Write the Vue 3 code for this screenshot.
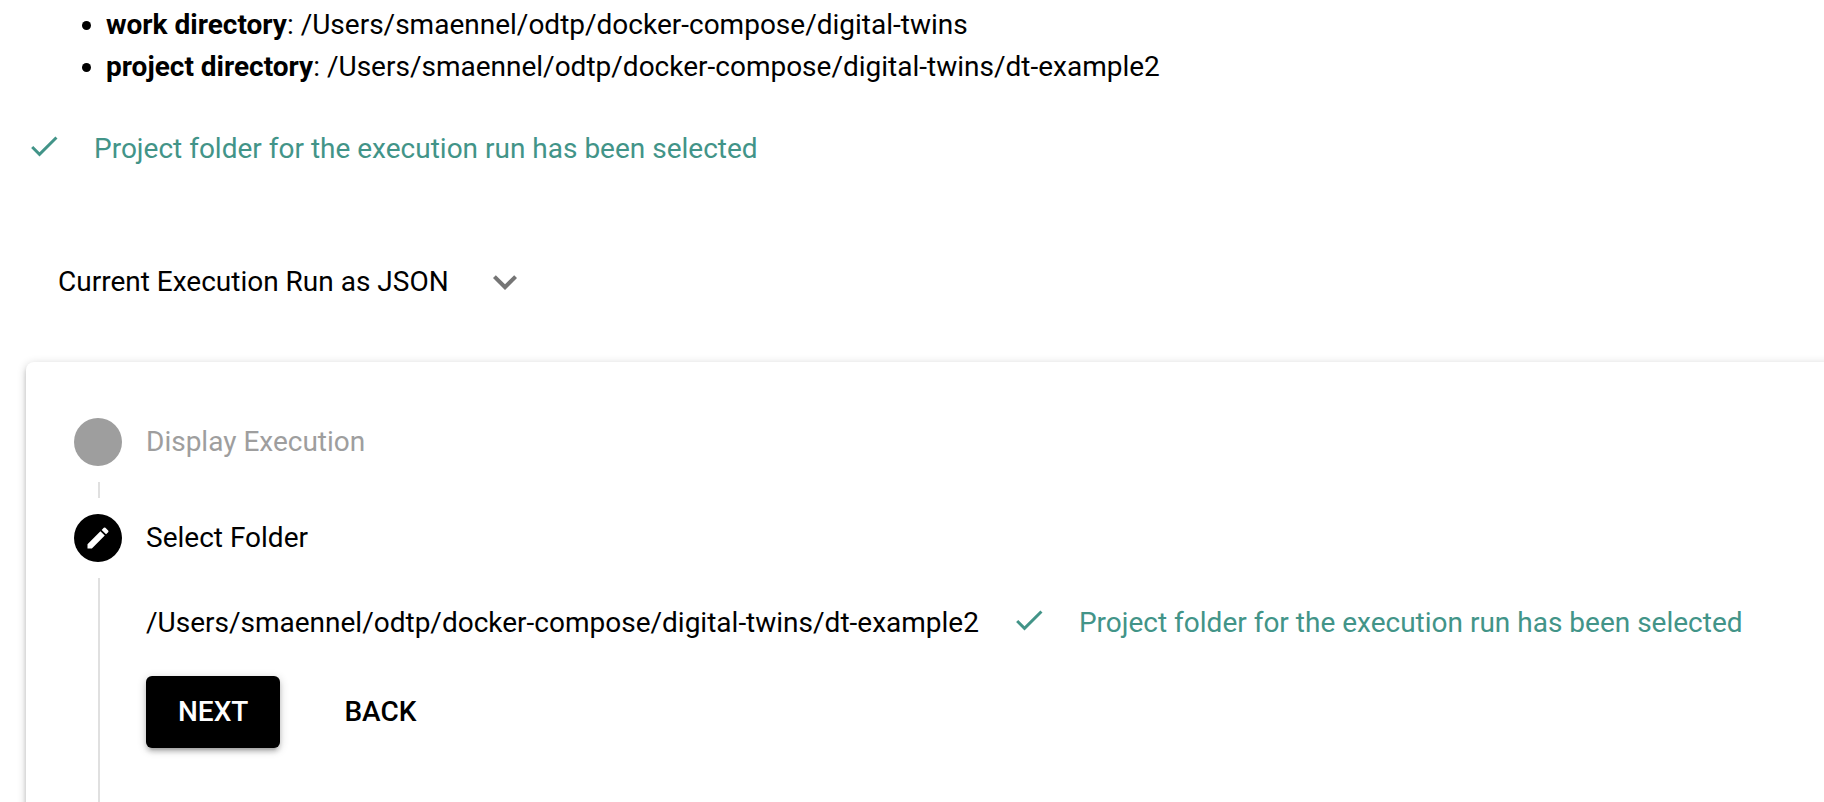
<script setup>
import { ref } from 'vue'

const base = '/Users/smaennel/odtp/docker-compose/digital-twins'
const project = `${base}/dt-example2`
const directories = [
  { label: 'work directory', path: base },
  { label: 'project directory', path: project },
]
const message = 'Project folder for the execution run has been selected'
const expanded = ref(false)
</script>

<template>
  <main class="page">
    <ul class="directories">
      <li v-for="item in directories" :key="item.label">
        <strong>{{ item.label }}</strong>: {{ item.path }}
      </li>
    </ul>

    <p class="status">
      <svg class="check" viewBox="0 0 24 24" aria-hidden="true">
        <path d="M9 16.17 4.83 12l-1.42 1.41L9 19 21 7l-1.41-1.41z" />
      </svg>
      <span>{{ message }}</span>
    </p>

    <button class="expansion" type="button" :aria-expanded="expanded" @click="expanded = !expanded">
      <span>Current Execution Run as JSON</span>
      <svg class="chevron" viewBox="0 0 24 24" aria-hidden="true">
        <path d="M7.41 8.59 12 13.17l4.59-4.58L18 10l-6 6-6-6z" />
      </svg>
    </button>

    <section class="stepper">
      <div class="step">
        <div class="rail">
          <span class="dot"></span>
          <span class="line"></span>
        </div>
        <h2 class="title">Display Execution</h2>
      </div>

      <div class="step active">
        <div class="rail">
          <span class="dot">
            <svg class="pencil" viewBox="0 0 24 24" aria-hidden="true">
              <path d="M3 17.25V21h3.75L17.81 9.94l-3.75-3.75L3 17.25zM20.71 7.04c.39-.39.39-1.02 0-1.41l-2.34-2.34a.9959.9959 0 0 0-1.41 0l-1.83 1.83 3.75 3.75 1.83-1.83z" />
            </svg>
          </span>
          <span class="line"></span>
        </div>
        <div class="body">
          <h2 class="title">Select Folder</h2>
          <div class="folder">
            <span>{{ project }}</span>
            <p class="status">
              <svg class="check" viewBox="0 0 24 24" aria-hidden="true">
                <path d="M9 16.17 4.83 12l-1.42 1.41L9 19 21 7l-1.41-1.41z" />
              </svg>
              <span>{{ message }}</span>
            </p>
          </div>
          <div class="actions">
            <button class="btn primary" type="button">Next</button>
            <button class="btn" type="button">Back</button>
          </div>
        </div>
      </div>
    </section>
  </main>
</template>

<style>
body {
  margin: 0;
  background: #fff;
}
</style>

<style scoped>
.page {
  box-sizing: border-box;
  display: flex;
  flex-direction: column;
  height: 100vh;
  padding: 4px 0 0 26px;
  overflow: hidden;
  color: #000;
  font: 400 28px/42px Roboto, "Liberation Sans", sans-serif;
}

.directories {
  margin: 0 0 40px;
  padding-left: 80px;
}

.status {
  display: flex;
  align-items: flex-start;
  gap: 32px;
  margin: 0;
  color: #429488;
}

.check {
  flex: none;
  width: 36px;
  height: 36px;
  fill: currentColor;
}

.expansion {
  display: flex;
  align-items: center;
  align-self: flex-start;
  gap: 32px;
  height: 96px;
  margin: 64px 0 32px;
  padding: 0 32px;
  border: 0;
  background: none;
  color: inherit;
  font: inherit;
  cursor: pointer;
}

.chevron {
  width: 48px;
  height: 48px;
  fill: #757575;
}

.stepper {
  display: flex;
  flex: 1;
  flex-direction: column;
  margin: 0 -16px -16px 0;
  padding: 56px 48px 0;
  border-radius: 8px;
  background: #fff;
  box-shadow: 0 2px 10px rgba(0, 0, 0, 0.2), 0 4px 4px rgba(0, 0, 0, 0.14), 0 6px 2px -4px rgba(0, 0, 0, 0.12);
}

.step {
  display: flex;
  gap: 24px;
  min-height: 96px;
  color: #9e9e9e;
}

.step.active {
  flex: 1;
  color: #000;
}

.rail {
  display: flex;
  flex-direction: column;
  gap: 16px;
  width: 48px;
}

.dot {
  display: flex;
  flex: none;
  align-items: center;
  justify-content: center;
  width: 48px;
  height: 48px;
  border-radius: 50%;
  background: currentColor;
}

.pencil {
  width: 28px;
  height: 28px;
  fill: #fff;
}

.line {
  flex: 1;
  width: 2px;
  margin: 0 0 16px 24px;
  background: #e0e0e0;
}

.active .line {
  margin-bottom: 0;
}

.title {
  margin: 0;
  font-size: 28px;
  font-weight: 400;
  line-height: 48px;
}

.folder {
  display: flex;
  align-items: center;
  gap: 32px;
  margin: 40px 0 32px;
  white-space: nowrap;
}

.actions {
  display: flex;
  gap: 32px;
}

.btn {
  height: 72px;
  padding: 0 32px;
  border: 0;
  border-radius: 6px;
  background: none;
  color: #000;
  font: inherit;
  font-weight: 500;
  text-transform: uppercase;
  cursor: pointer;
}

.primary {
  background: #000;
  color: #fff;
  box-shadow: 0 2px 10px rgba(0, 0, 0, 0.2), 0 4px 4px rgba(0, 0, 0, 0.14), 0 6px 2px -4px rgba(0, 0, 0, 0.12);
}
</style>
